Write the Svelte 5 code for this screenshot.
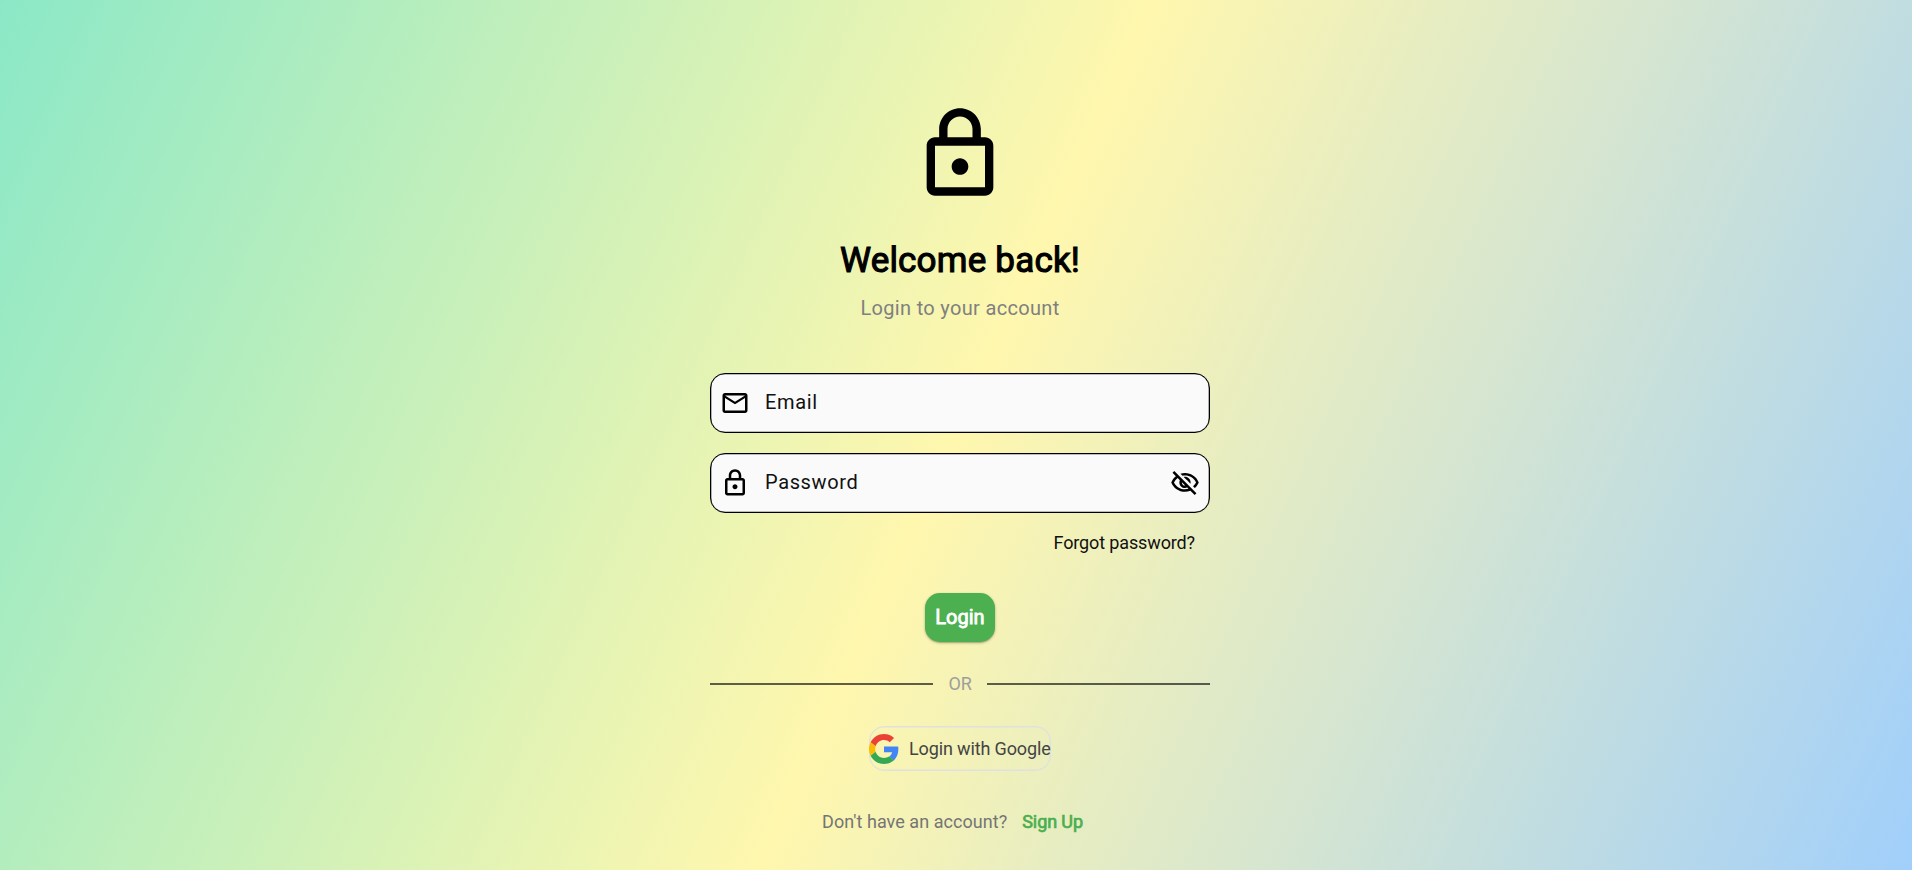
<script>
  let email = $state('');
  let password = $state('');
  let visible = $state(false);
</script>

{#snippet lock()}
  <svg viewBox="0 0 24 24" aria-hidden="true"><path d="M18 8h-1V6c0-2.76-2.24-5-5-5S7 3.24 7 6v2H6c-1.1 0-2 .9-2 2v10c0 1.1.9 2 2 2h12c1.1 0 2-.9 2-2V10c0-1.1-.9-2-2-2zM9 6c0-1.66 1.34-3 3-3s3 1.34 3 3v2H9V6zm9 14H6V10h12v10zm-6-3c1.1 0 2-.9 2-2s-.9-2-2-2-2 .9-2 2 .9 2 2 2z"/></svg>
{/snippet}

<main>
  <div class="column">
    <div class="hero">{@render lock()}</div>
    <h1>Welcome back!</h1>
    <p class="subtitle">Login to your account</p>

    <label class="field">
      <svg viewBox="0 0 24 24" aria-hidden="true"><path d="M22 6c0-1.1-.9-2-2-2H4c-1.1 0-2 .9-2 2v12c0 1.1.9 2 2 2h16c1.1 0 2-.9 2-2V6zm-2 0l-8 5-8-5h16zm0 12H4V8l8 5 8-5v10z"/></svg>
      <input type="text" placeholder="Email" bind:value={email} />
    </label>
    <label class="field second">
      {@render lock()}
      <input type={visible ? 'text' : 'password'} placeholder="Password" bind:value={password} />
      <button class="eye" type="button" aria-pressed={visible} onclick={() => (visible = !visible)}>
        <svg viewBox="0 0 24 24" aria-hidden="true"><path d="M12 6c3.79 0 7.17 2.13 8.82 5.5-.59 1.22-1.42 2.27-2.41 3.12l1.41 1.41c1.39-1.23 2.49-2.77 3.18-4.53C21.27 7.11 17 4 12 4c-1.27 0-2.49.2-3.64.57l1.65 1.65C10.66 6.09 11.32 6 12 6zm-1.07 1.14L13 9.21c.57.25 1.03.71 1.28 1.28l2.07 2.07c.08-.34.14-.7.14-1.07C16.5 9.01 14.48 7 12 7c-.37 0-.72.05-1.07.14zM2.01 3.87l2.68 2.68C3.06 7.83 1.77 9.53 1 11.5 2.73 15.89 7 19 12 19c1.52 0 2.98-.29 4.32-.82l3.42 3.42 1.41-1.41L3.42 2.45 2.01 3.87zm7.5 7.5l2.61 2.61c-.04.01-.08.02-.12.02-1.38 0-2.5-1.12-2.5-2.5 0-.05.01-.08.01-.13zm-3.4-3.4l1.75 1.75c-.23.55-.36 1.15-.36 1.78 0 2.48 2.02 4.5 4.5 4.5.63 0 1.23-.13 1.77-.36l.98.98c-.88.24-1.8.38-2.75.38-3.79 0-7.17-2.13-8.82-5.5.7-1.43 1.72-2.61 2.93-3.53z"/></svg>
      </button>
    </label>
    <div class="forgot">Forgot password?</div>

    <button class="login" type="button">Login</button>

    <div class="divider"><i></i><span>OR</span><i></i></div>

    <button class="google" type="button">
      <svg viewBox="0 0 48 48" aria-hidden="true">
        <path fill="#EA4335" d="M24 9.5c3.54 0 6.71 1.22 9.21 3.6l6.85-6.85C35.9 2.38 30.47 0 24 0 14.62 0 6.51 5.38 2.56 13.22l7.98 6.19C12.43 13.72 17.74 9.5 24 9.5z"/>
        <path fill="#4285F4" d="M46.98 24.55c0-1.57-.15-3.09-.38-4.55H24v9.02h12.94c-.58 2.96-2.26 5.48-4.78 7.18l7.73 6c4.51-4.18 7.09-10.36 7.09-17.65z"/>
        <path fill="#FBBC05" d="M10.53 28.59c-.48-1.45-.76-2.99-.76-4.59s.27-3.14.76-4.59l-7.98-6.19C.92 16.46 0 20.12 0 24c0 3.88.92 7.54 2.56 10.78l7.97-6.19z"/>
        <path fill="#34A853" d="M24 48c6.48 0 11.93-2.13 15.89-5.81l-7.73-6c-2.15 1.45-4.92 2.3-8.16 2.3-6.26 0-11.57-4.22-13.47-9.91l-7.98 6.19C6.51 42.62 14.62 48 24 48z"/>
      </svg>
      <span>Login with Google</span>
    </button>

    <div class="signup"><span>Don't have an account?</span><b>Sign Up</b></div>
  </div>
</main>

<style>
  :global(body) { margin: 0; }
  main {
    box-sizing: border-box;
    height: 870px;
    padding-top: 104px;
    overflow: hidden;
    display: flex;
    justify-content: center;
    background: linear-gradient(114.466deg, #8be8c7 0%, #fff7ae 50%, #a1cffb 100%);
    font-family: Roboto, sans-serif;
    font-weight: 400;
    color: #000;
  }
  .column { width: 500px; margin-left: 8px; display: flex; flex-direction: column; align-items: center; }
  svg { display: block; flex: none; }
  button { font: inherit; border: 0; padding: 0; background: none; cursor: pointer; white-space: nowrap; }
  .hero svg { width: 100px; height: 100px; }
  h1 {
    margin: 36px 0 0;
    font-size: 35px;
    line-height: 41px;
    font-weight: 400;
    letter-spacing: 0.2px;
    -webkit-text-stroke: 1.1px #000;
  }
  .subtitle { margin: 15px 0 0; font-size: 20px; line-height: 24px; letter-spacing: 0.32px; color: #808080; }
  .field {
    box-sizing: border-box;
    width: 500px;
    height: 60px;
    margin-top: 53px;
    padding: 0 9px;
    display: flex;
    align-items: center;
    border: 1px solid #000;
    border-radius: 15px;
    background: #fafafa;
    box-shadow: inset 0 0 0 0.3px #000;
  }
  .second { margin-top: 20px; }
  .field svg { width: 30px; height: 30px; }
  input {
    flex: 1;
    min-width: 0;
    margin-left: 15px;
    padding: 0 0 2px;
    border: 0;
    outline: 0;
    background: none;
    font: 400 20px/24px Roboto, sans-serif;
    letter-spacing: 0.62px;
    color: #000;
  }
  input::placeholder { color: #111; opacity: 1; }
  .forgot { align-self: flex-end; margin: 19px 15px 0 0; font-size: 18px; line-height: 22px; letter-spacing: -0.13px; color: #111; }
  .login {
    width: 70px;
    height: 49px;
    margin-top: 39px;
    padding-bottom: 2px;
    border-radius: 15px;
    background: #4caf50;
    color: #fff;
    font-size: 20px;
    -webkit-text-stroke: 0.8px #fff;
    box-shadow: 0 1px 3px rgba(0, 0, 0, 0.26), 0 1px 1px rgba(0, 0, 0, 0.14);
  }
  .divider { width: 500px; height: 22px; margin-top: 31px; display: flex; align-items: center; gap: 15px; font-size: 18px; letter-spacing: -0.15px; color: #9e9e9e; }
  .divider span { padding-bottom: 2px; }
  .divider i { flex: 1; height: 2px; background: rgba(0, 0, 0, 0.62); }
  .google {
    box-sizing: border-box;
    width: 182px;
    height: 45px;
    margin-top: 31px;
    display: flex;
    align-items: center;
    gap: 10px;
    border: 1px solid #e0e0e0;
    border-radius: 15px;
    box-shadow: inset 0 0 0 0.4px #e0e0e0;
    font-size: 18px;
    letter-spacing: -0.13px;
    color: #444;
  }
  .google svg { width: 30px; height: 30px; margin-left: -1px; }
  .signup {
    box-sizing: border-box;
    width: 500px;
    margin-top: 40px;
    padding-right: 15px;
    display: flex;
    justify-content: center;
    gap: 15px;
    font-size: 18px;
    line-height: 22px;
    letter-spacing: 0.05px;
    color: #757575;
  }
  .signup b { font-weight: 400; letter-spacing: -0.1px; color: #4caf50; -webkit-text-stroke: 0.7px #4caf50; }
</style>
